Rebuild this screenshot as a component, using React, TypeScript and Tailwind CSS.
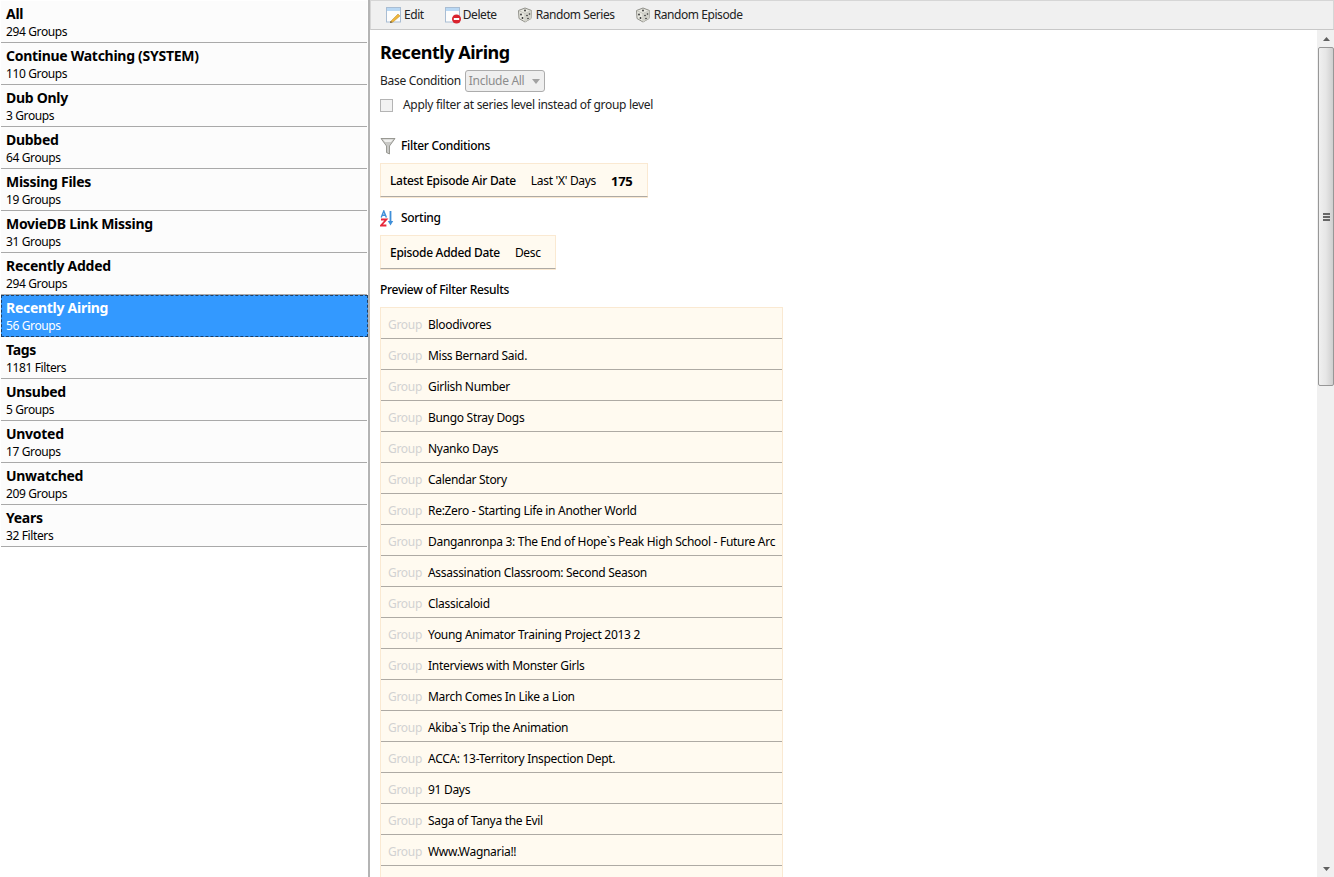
import React from 'react';

const filters = [
  { name: 'All', count: '294 Groups' },
  { name: 'Continue Watching (SYSTEM)', count: '110 Groups' },
  { name: 'Dub Only', count: '3 Groups' },
  { name: 'Dubbed', count: '64 Groups' },
  { name: 'Missing Files', count: '19 Groups' },
  { name: 'MovieDB Link Missing', count: '31 Groups' },
  { name: 'Recently Added', count: '294 Groups' },
  { name: 'Recently Airing', count: '56 Groups', selected: true },
  { name: 'Tags', count: '1181 Filters' },
  { name: 'Unsubed', count: '5 Groups' },
  { name: 'Unvoted', count: '17 Groups' },
  { name: 'Unwatched', count: '209 Groups' },
  { name: 'Years', count: '32 Filters' },
];

const groups = [
  'Bloodivores',
  'Miss Bernard Said.',
  'Girlish Number',
  'Bungo Stray Dogs',
  'Nyanko Days',
  'Calendar Story',
  'Re:Zero - Starting Life in Another World',
  'Danganronpa 3: The End of Hope`s Peak High School - Future Arc',
  'Assassination Classroom: Second Season',
  'Classicaloid',
  'Young Animator Training Project 2013 2',
  'Interviews with Monster Girls',
  'March Comes In Like a Lion',
  'Akiba`s Trip the Animation',
  'ACCA: 13-Territory Inspection Dept.',
  '91 Days',
  'Saga of Tanya the Evil',
  'Www.Wagnaria!!',
];

const PageIcon = ({ badge }: { badge: 'edit' | 'delete' }) => (
  <svg width="18" height="18" viewBox="0 0 18 18">
    <rect x="1.5" y="1.5" width="14" height="14.5" fill="#fdfdfd" stroke="#a9bdd3" />
    <rect x="2" y="2" width="13" height="3" fill="#b9d8f4" />
    {badge === 'edit' ? (
      <>
        <path d="M6 15 L13 8 L15 10 L8 16 L5.5 16.5 Z" fill="#f0b73c" stroke="#b98a30" strokeWidth="0.5" />
        <path d="M5 17 L5.5 15 L7.5 16.3 Z" fill="#6b5a3a" />
      </>
    ) : (
      <>
        <circle cx="12.5" cy="13" r="4.5" fill="#d9232e" />
        <rect x="9.8" y="12" width="5.4" height="2" fill="#fff" />
      </>
    )}
  </svg>
);

const DiceIcon = () => (
  <svg width="16" height="16" viewBox="0 0 16 16">
    <path d="M8 1 L14.5 3.5 L14 11.5 L8 15 L2 11.5 L1.5 3.5 Z" fill="#e8e8e0" stroke="#8f8f88" />
    <path d="M1.5 3.5 L8 6.5 L14.5 3.5 M8 6.5 L8 15" fill="none" stroke="#b5b5ae" strokeWidth="0.7" />
    <path d="M8 6.5 L14.5 3.5 L14 11.5 L8 15 Z" fill="#d2d2ca" />
    <circle cx="8" cy="3.5" r="0.9" fill="#333" />
    <circle cx="4" cy="7.5" r="0.9" fill="#333" />
    <circle cx="5.5" cy="11" r="0.9" fill="#333" />
    <circle cx="10" cy="8.5" r="0.8" fill="#333" />
    <circle cx="12.5" cy="7" r="0.8" fill="#333" />
    <circle cx="11" cy="11.5" r="0.8" fill="#333" />
  </svg>
);

const FunnelIcon = () => (
  <svg width="16" height="18" viewBox="0 0 16 18">
    <path d="M1 1.5 L15 1.5 L9.5 9 L9.5 17 L6.5 15.5 L6.5 9 Z" fill="#c9c9c6" stroke="#85857f" strokeWidth="0.8" />
    <path d="M3 2.5 L13 2.5 L11 5 L5 5 Z" fill="#f0f0ee" />
  </svg>
);

const SortIcon = () => (
  <svg width="15" height="17" viewBox="0 0 15 17">
    <path d="M1.2 7.5 L3.8 1 L6.4 7.5 M2.3 5.2 L5.3 5.2" fill="none" stroke="#3f8fd8" strokeWidth="1.4" />
    <path d="M1 9.5 L6.4 9.5 L1 15.5 L6.4 15.5" fill="none" stroke="#e8283c" strokeWidth="1.8" />
    <path d="M10.5 1 L10.5 13" stroke="#3f8fd8" strokeWidth="1.8" />
    <path d="M7.8 11 L13.2 11 L10.5 15.5 Z" fill="#3f8fd8" />
  </svg>
);

const ToolButton = ({ icon, label, className }: { icon: React.ReactNode; label: string; className: string }) => (
  <div className={`flex items-center ${className}`}>
    {icon}
    <span>{label}</span>
  </div>
);

export default function App() {
  return (
    <div className="flex h-[877px] w-[1334px] overflow-hidden bg-white text-[12px] leading-[16px] text-black font-['Noto_Sans',sans-serif] tracking-[-0.3px]">
      {/* filter list */}
      <div className="w-[368px] shrink-0 bg-white pl-px pt-px">
        {filters.map((f) =>
          f.selected ? (
            <div key={f.name} className="h-[42px] bg-[#3399ff] text-white border border-dashed border-[#1c3f66] pl-[4px] pt-[2px]">
              <div className="text-[14px] leading-[20px] font-bold tracking-[-0.28px]">{f.name}</div>
              <div className="leading-[15px] tracking-[-0.38px]">{f.count}</div>
            </div>
          ) : (
            <div key={f.name} className="h-[42px] w-[366px] bg-[#fcfcfc] border-b border-[#a9a9a9] pl-[5px] pt-[3px]">
              <div className="text-[14px] leading-[20px] font-bold tracking-[-0.28px]">{f.name}</div>
              <div className="leading-[15px] tracking-[-0.38px]">{f.count}</div>
            </div>
          )
        )}
      </div>
      <div className="w-[2px] shrink-0 bg-[#b4b4b4]" />

      {/* main */}
      <div className="flex min-w-0 flex-1 flex-col">
        <div className="flex h-[30px] shrink-0 items-center border border-[#d6d6d6] border-b-[#c8c8c8] bg-[#f0f0f0] pl-[14px] text-[#222] tracking-[-0.43px]">
          <ToolButton icon={<PageIcon badge="edit" />} label="Edit" className="gap-px" />
          <ToolButton icon={<PageIcon badge="delete" />} label="Delete" className="ml-[20px] gap-px" />
          <ToolButton icon={<DiceIcon />} label="Random Series" className="ml-[20px] gap-[3px]" />
          <ToolButton icon={<DiceIcon />} label="Random Episode" className="ml-[20px] gap-[3px]" />
        </div>

        <div className="flex min-h-0 flex-1">
          <div className="min-w-0 flex-1 overflow-hidden pl-[10px]">
            <h1 className="mt-[10px] text-[18px] leading-[24px] font-bold tracking-[-0.47px]">Recently Airing</h1>
            <div className="mt-[6px] flex h-[22px] items-center gap-[4px] text-[#222]">
              <span>Base Condition</span>
              <div className="flex h-[22px] w-[80px] items-center rounded-[3px] border border-[#acacac] bg-[#efefef] pl-[3px] text-[#8c8c8c]">
                <span>Include All</span>
                <svg className="ml-[8px]" width="8" height="5" viewBox="0 0 8 5">
                  <path d="M0 0 L8 0 L4 5 Z" fill="#a2a2a2" />
                </svg>
              </div>
            </div>
            <div className="mt-[3px] flex h-[20px] items-center text-[#222]">
              <div className="h-[13px] w-[13px] border border-[#b4b4b4] bg-[#f2f2f2]" />
              <span className="ml-[10px]">Apply filter at series level instead of group level</span>
            </div>

            <div className="mt-[20px] flex h-[22px] items-center gap-[5px] font-medium">
              <FunnelIcon />
              <span>Filter Conditions</span>
            </div>
            <div className="mt-[6px] flex h-[34px] w-[268px] items-center border border-[#fae9d2] border-b-[#aeaaa4] bg-[#fffaf0] pl-[9px] pt-[2px] shadow-[0_1px_0_#fae9d2]">
              <span className="font-medium">Latest Episode Air Date</span>
              <span className="ml-[15px]">Last 'X' Days</span>
              <span className="ml-[15px] text-[13px] font-bold">175</span>
            </div>
            <div className="mt-[11px] flex h-[20px] items-center gap-[6px] font-medium">
              <SortIcon />
              <span>Sorting</span>
            </div>
            <div className="mt-[7px] flex h-[34px] w-[176px] items-center border border-[#fae9d2] border-b-[#aeaaa4] bg-[#fffaf0] pl-[9px] pt-[2px] shadow-[0_1px_0_#fae9d2]">
              <span className="font-medium">Episode Added Date</span>
              <span className="ml-[15px]">Desc</span>
            </div>
            <div className="mt-[11px] h-[20px] leading-[20px] font-medium">Preview of Filter Results</div>

            <div className="mt-[7px] h-[600px] w-[403px] border-x border-t border-[#fae9d2] bg-[#fffaf0]">
              {groups.map((g) => (
                <div key={g} className="flex h-[31px] items-center whitespace-nowrap border-b border-[#aeaaa4] pl-[7px] pt-[3px]">
                  <span className="w-[40px] text-[#d2d2d2]">Group</span>
                  <span>{g}</span>
                </div>
              ))}
            </div>
          </div>

          {/* scrollbar */}
          <div className="flex w-[17px] shrink-0 flex-col items-center bg-[#f0f0f0] pl-[1px]">
            <div className="flex h-[17px] items-center justify-center">
              <svg width="7" height="4" viewBox="0 0 7 4">
                <path d="M3.5 0 L7 4 L0 4 Z" fill="#606060" />
              </svg>
            </div>
            <div className="flex h-[339px] w-[16px] items-center justify-center rounded-[2px] border border-[#979797] bg-gradient-to-r from-[#f0f0f0] via-[#e6e6e6] to-[#cfcfcf]">
              <div className="flex w-[7px] flex-col gap-px">
                <div className="h-[2px] bg-[#666]" />
                <div className="h-[2px] bg-[#666]" />
                <div className="h-[2px] bg-[#666]" />
              </div>
            </div>
            <div className="flex-1" />
            <div className="flex h-[17px] items-center justify-center">
              <svg width="7" height="4" viewBox="0 0 7 4">
                <path d="M0 0 L7 0 L3.5 4 Z" fill="#606060" />
              </svg>
            </div>
          </div>
        </div>
      </div>
    </div>
  );
}
